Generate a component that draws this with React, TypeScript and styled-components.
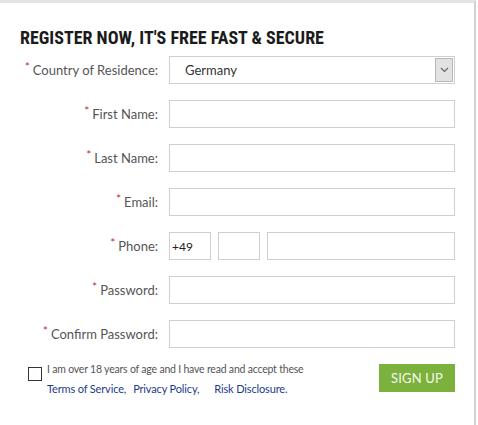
import * as React from "react";
import styled, { createGlobalStyle } from "styled-components";

const GlobalStyle = createGlobalStyle`
  html, body {
    margin: 0;
    padding: 0;
    background: #ffffff;
  }
  * {
    box-sizing: border-box;
  }
`;

const Panel = styled.div`
  width: 476px;
  height: 425px;
  border-top: 3px solid #e4e4e4;
  border-right: 2px solid #d2d2d2;
  background: #ffffff;
  padding: 24px 0 0 20px;
  font-family: Lato, "Open Sans", sans-serif;
`;

const Title = styled.h2`
  margin: 0 0 7px 0;
  font-family: "Liberation Sans Narrow", "Roboto Condensed", "DejaVu Sans Condensed", sans-serif;
  font-weight: 700;
  font-size: 18px;
  line-height: 22px;
  color: #1b1b1b;
`;

const FormGrid = styled.div`
  display: grid;
  grid-template-columns: 138px 286px;
  column-gap: 11px;
  row-gap: 16px;
  align-items: center;
`;

const FieldLabel = styled.label`
  justify-self: end;
  font-size: 13px;
  color: #555;
  white-space: nowrap;
`;

const Star = styled.span`
  color: #c0303a;
  font-size: 12px;
  position: relative;
  top: -4px;
  margin-right: 3px;
`;

const TextInput = styled.input<{ $w?: number }>`
  height: 28px;
  width: ${p => (p.$w ? `${p.$w}px` : "100%")};
  flex: ${p => (p.$w ? "none" : "1")};
  border: 1px solid #cfcfcf;
  padding: 0 2px;
  font-family: Lato, "Open Sans", sans-serif;
  font-size: 12px;
  color: #222;
  outline: none;
  background: #fff;
`;

const PhoneRow = styled.div`
  display: flex;
  gap: 7px;
`;

const SelectBox = styled.div`
  display: flex;
  height: 28px;
  border: 1px solid #cfcfcf;
  background: #fff;
`;

const Select = styled.select`
  flex: 1;
  appearance: none;
  border: none;
  background: transparent;
  padding-left: 15px;
  font-family: Lato, "Open Sans", sans-serif;
  font-size: 13px;
  color: #333;
  outline: none;
`;

const ArrowBox = styled.div`
  width: 18px;
  margin: 1px;
  background: #e2e2e2;
  border: 1px solid #b8b8b8;
  display: flex;
  align-items: center;
  justify-content: center;
`;

const Footer = styled.div`
  display: flex;
  justify-content: space-between;
  align-items: flex-start;
  margin-top: 16px;
  padding-left: 8px;
  width: 435px;
`;

const Agree = styled.div`
  display: flex;
  gap: 5px;
  font-size: 10.5px;
  color: #555;
  letter-spacing: -0.2px;
`;

const CheckBox = styled.input`
  appearance: none;
  width: 14px;
  height: 14px;
  margin: 3px 0 0 0;
  border: 1px solid #333;
  background: #fff;
`;

const AgreeText = styled.div`
  line-height: 19px;
  margin-top: -4px;
`;

const Links = styled.div`
  display: flex;
  gap: 7px;
  font-size: 11px;
  letter-spacing: -0.15px;
`;

const DocLink = styled.a<{ $gap?: number }>`
  color: #1d3a8a;
  text-decoration: none;
  margin-right: ${p => p.$gap ?? 0}px;
`;

const SignUp = styled.button`
  width: 76px;
  height: 28px;
  border: none;
  background: #7cb13d;
  color: #f4f9ec;
  font-family: Lato, "Open Sans", sans-serif;
  font-size: 13px;
  letter-spacing: 0.2px;
  cursor: pointer;
`;

function Required({ children }: { children: React.ReactNode }) {
  return (
    <FieldLabel>
      <Star>*</Star>
      {children}
    </FieldLabel>
  );
}

export default function App() {
  return (
    <>
      <GlobalStyle />
      <Panel>
        <Title>REGISTER NOW, IT'S FREE FAST &amp; SECURE</Title>
        <FormGrid>
          <Required>Country of Residence:</Required>
          <SelectBox>
            <Select defaultValue="Germany">
              <option>Germany</option>
            </Select>
            <ArrowBox>
              <svg width="9" height="6" viewBox="0 0 9 6">
                <path d="M1 1l3.5 3.5L8 1" fill="none" stroke="#666" strokeWidth="1.2" />
              </svg>
            </ArrowBox>
          </SelectBox>

          <Required>First Name:</Required>
          <TextInput type="text" />

          <Required>Last Name:</Required>
          <TextInput type="text" />

          <Required>Email:</Required>
          <TextInput type="email" />

          <Required>Phone:</Required>
          <PhoneRow>
            <TextInput $w={42} type="text" defaultValue="+49" />
            <TextInput $w={42} type="text" />
            <TextInput type="text" />
          </PhoneRow>

          <Required>Password:</Required>
          <TextInput type="password" />

          <Required>Confirm Password:</Required>
          <TextInput type="password" />
        </FormGrid>

        <Footer>
          <Agree>
            <CheckBox type="checkbox" />
            <AgreeText>
              I am over 18 years of age and I have read and accept these
              <Links>
                <DocLink href="#">Terms of Service,</DocLink>
                <DocLink href="#" $gap={8}>Privacy Policy,</DocLink>
                <DocLink href="#">Risk Disclosure.</DocLink>
              </Links>
            </AgreeText>
          </Agree>
          <SignUp>SIGN UP</SignUp>
        </Footer>
      </Panel>
    </>
  );
}
